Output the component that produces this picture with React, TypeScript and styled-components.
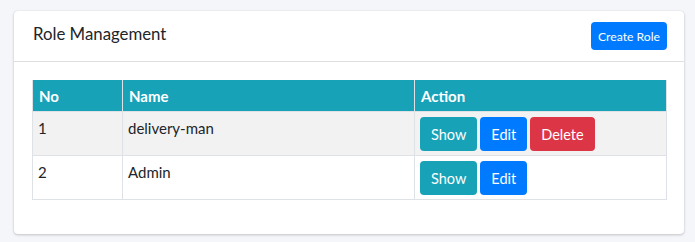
import styled, { createGlobalStyle } from "styled-components";

const GlobalStyle = createGlobalStyle`
	html, body {
		margin: 0;
		padding: 0;
		background-color: #f4f6f9;
		font-family: Lato, "Liberation Sans", sans-serif;
		color: #212529;
	}
`;

const Page = styled.div`
	padding: 11px 11px 9px 14px;
`;

const Card = styled.div`
	background-color: #fff;
	border-radius: 4px;
	box-shadow: 0 0 1px rgba(0, 0, 0, 0.125), 0 1px 3px rgba(0, 0, 0, 0.2);
`;

const CardHeader = styled.div`
	display: flex;
	align-items: center;
	justify-content: space-between;
	height: 50px;
	padding: 0 17px 0 19px;
	border-bottom: 1px solid rgba(0, 0, 0, 0.125);
`;

const Title = styled.h3`
	margin: 0 0 6px;
	font-size: 16.8px;
	font-weight: 400;
	color: #212529;
`;

const CardBody = styled.div`
	padding: 18px 17px 34px 18px;
`;

const Button = styled.button<{ $variant: "info" | "primary" | "danger"; $small?: boolean }>`
	display: inline-flex;
	align-items: center;
	justify-content: center;
	height: ${(p) => (p.$small ? "28px" : "34px")};
	padding: 0 ${(p) => (p.$small ? "7px" : "11px")};
	border: none;
	border-radius: 4px;
	font-family: inherit;
	font-size: ${(p) => (p.$small ? "12.2px" : "14.5px")};
	color: #fff;
	cursor: pointer;
	background-color: ${(p) =>
		p.$variant === "info" ? "#17a2b8" : p.$variant === "danger" ? "#dc3545" : "#007bff"};
`;

const Table = styled.table`
	width: 100%;
	table-layout: fixed;
	border-collapse: collapse;
	font-size: 15px;
`;

const Th = styled.th<{ $width?: string }>`
	background-color: #17a2b8;
	color: #fff;
	text-align: left;
	font-weight: 700;
	height: 31px;
	padding: 0 6px;
	border: 1px solid #dee2e6;
	border-top: none;
	width: ${(p) => p.$width || "auto"};
`;

const Row = styled.tr<{ $striped?: boolean }>`
	background-color: ${(p) => (p.$striped ? "#f2f2f2" : "#fff")};
`;

const Td = styled.td`
	vertical-align: top;
	height: 44px;
	box-sizing: border-box;
	padding: 5px 4px 4px 5px;
	line-height: 22px;
	border: 1px solid #dee2e6;
`;

const Actions = styled.div`
	display: flex;
	gap: 3px;
`;

const roles = [
	{ id: 1, name: "delivery-man", canDelete: true },
	{ id: 2, name: "Admin", canDelete: false },
];

export default function App() {
	return (
		<Page>
			<GlobalStyle />
			<Card>
				<CardHeader>
					<Title>Role Management</Title>
					<Button $variant="primary" $small>
						Create Role
					</Button>
				</CardHeader>
				<CardBody>
					<Table>
						<thead>
							<tr>
								<Th $width="77px">No</Th>
								<Th $width="279px">Name</Th>
								<Th>Action</Th>
							</tr>
						</thead>
						<tbody>
							{roles.map((role, i) => (
								<Row key={role.id} $striped={i % 2 === 0}>
									<Td>{role.id}</Td>
									<Td>{role.name}</Td>
									<Td>
										<Actions>
											<Button $variant="info">Show</Button>
											<Button $variant="primary">Edit</Button>
											{role.canDelete && <Button $variant="danger">Delete</Button>}
										</Actions>
									</Td>
								</Row>
							))}
						</tbody>
					</Table>
				</CardBody>
			</Card>
		</Page>
	);
}
